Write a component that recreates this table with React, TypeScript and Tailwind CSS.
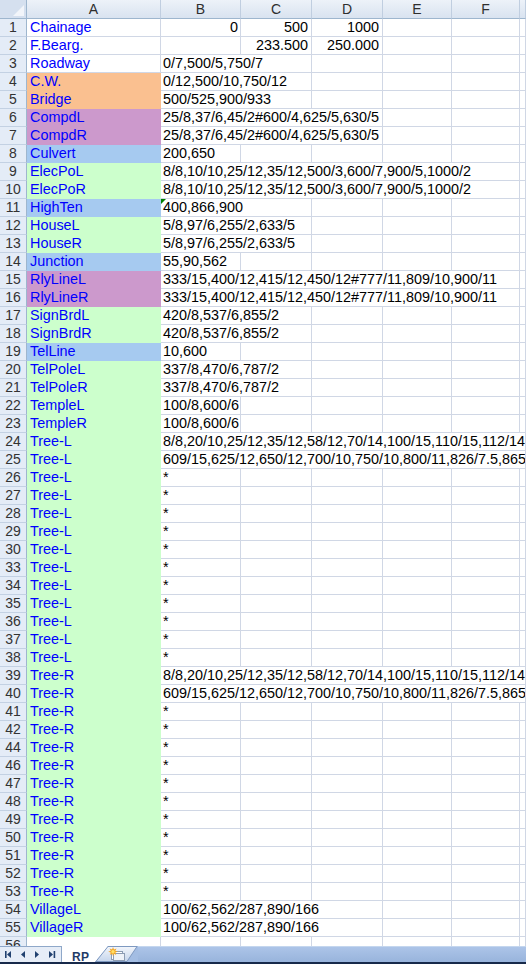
type Fill = 'none' | 'orange' | 'purple' | 'blue' | 'green'

type RowData = {
  n: number
  label?: string
  fill: Fill
  value?: string
  span?: number
  nums?: string[]
  flag?: boolean
}

const fills: Record<Fill, string> = {
  none: 'bg-white border-[#d0d7e5]',
  orange: 'bg-[#fac090] border-[#fac090]',
  purple: 'bg-[#cc99cc] border-[#cc99cc]',
  blue: 'bg-[#a6caf0] border-[#a6caf0]',
  green: 'bg-[#ccffcc] border-[#ccffcc]',
}

// widths for column B when its text runs over into the next columns
const spanWidth: Record<number, string> = {
  1: 'w-[80px] shrink-0',
  2: 'w-[151px] shrink-0',
  3: 'w-[222px] shrink-0',
  5: 'w-[359px] shrink-0',
  6: 'flex-1 min-w-0',
}

// C, D, E, F, G
const restCols = ['w-[71px] shrink-0', 'w-[71px] shrink-0', 'w-[69px] shrink-0', 'w-[68px] shrink-0', 'flex-1 min-w-0']

const headers = [
  { l: 'A', w: 'w-[134px] shrink-0' },
  { l: 'B', w: 'w-[80px] shrink-0' },
  { l: 'C', w: 'w-[71px] shrink-0' },
  { l: 'D', w: 'w-[71px] shrink-0' },
  { l: 'E', w: 'w-[69px] shrink-0' },
  { l: 'F', w: 'w-[68px] shrink-0' },
  { l: '', w: 'flex-1 min-w-0' },
]

const treeL1 = '8/8,20/10,25/12,35/12,58/12,70/14,100/15,110/15,112/14,120/14,135/12'
const treeL2 = '609/15,625/12,650/12,700/10,750/10,800/11,826/7.5,865/7,900/6'
const elec = '8/8,10/10,25/12,35/12,500/3,600/7,900/5,1000/2'
const rly = '333/15,400/12,415/12,450/12#777/11,809/10,900/11'
const compd = '25/8,37/6,45/2#600/4,625/5,630/5'

const rows: RowData[] = [
  { n: 1, label: 'Chainage', fill: 'none', nums: ['0', '500', '1000'] },
  { n: 2, label: 'F.Bearg.', fill: 'none', nums: ['', '233.500', '250.000'] },
  { n: 3, label: 'Roadway', fill: 'none', value: '0/7,500/5,750/7', span: 2 },
  { n: 4, label: 'C.W.', fill: 'orange', value: '0/12,500/10,750/12', span: 2 },
  { n: 5, label: 'Bridge', fill: 'orange', value: '500/525,900/933', span: 2 },
  { n: 6, label: 'CompdL', fill: 'purple', value: compd, span: 3 },
  { n: 7, label: 'CompdR', fill: 'purple', value: compd, span: 3 },
  { n: 8, label: 'Culvert', fill: 'blue', value: '200,650' },
  { n: 9, label: 'ElecPoL', fill: 'green', value: elec, span: 5 },
  { n: 10, label: 'ElecPoR', fill: 'green', value: elec, span: 5 },
  { n: 11, label: 'HighTen', fill: 'blue', value: '400,866,900', span: 2, flag: true },
  { n: 12, label: 'HouseL', fill: 'green', value: '5/8,97/6,255/2,633/5', span: 2 },
  { n: 13, label: 'HouseR', fill: 'green', value: '5/8,97/6,255/2,633/5', span: 2 },
  { n: 14, label: 'Junction', fill: 'blue', value: '55,90,562' },
  { n: 15, label: 'RlyLineL', fill: 'purple', value: rly, span: 5 },
  { n: 16, label: 'RlyLineR', fill: 'purple', value: rly, span: 5 },
  { n: 17, label: 'SignBrdL', fill: 'green', value: '420/8,537/6,855/2', span: 2 },
  { n: 18, label: 'SignBrdR', fill: 'green', value: '420/8,537/6,855/2', span: 2 },
  { n: 19, label: 'TelLine', fill: 'blue', value: '10,600' },
  { n: 20, label: 'TelPoleL', fill: 'green', value: '337/8,470/6,787/2', span: 2 },
  { n: 21, label: 'TelPoleR', fill: 'green', value: '337/8,470/6,787/2', span: 2 },
  { n: 22, label: 'TempleL', fill: 'green', value: '100/8,600/6' },
  { n: 23, label: 'TempleR', fill: 'green', value: '100/8,600/6' },
  { n: 24, label: 'Tree-L', fill: 'green', value: treeL1, span: 6 },
  { n: 25, label: 'Tree-L', fill: 'green', value: treeL2, span: 6 },
  ...[26, 27, 28, 29, 30, 33, 34, 35, 36, 37, 38].map((n) => ({ n, label: 'Tree-L', fill: 'green' as Fill, value: '*' })),
  { n: 39, label: 'Tree-R', fill: 'green', value: treeL1, span: 6 },
  { n: 40, label: 'Tree-R', fill: 'green', value: treeL2, span: 6 },
  ...[41, 42, 44, 46, 47, 48, 49, 50, 51, 52, 53].map((n) => ({ n, label: 'Tree-R', fill: 'green' as Fill, value: '*' })),
  { n: 54, label: 'VillageL', fill: 'green', value: '100/62,562/287,890/166', span: 3 },
  { n: 55, label: 'VillageR', fill: 'green', value: '100/62,562/287,890/166', span: 3 },
]

const cell = 'h-full border-r border-b border-[#d0d7e5] overflow-hidden whitespace-nowrap leading-[17px]'

function Row({ r }: { r: RowData }) {
  const span = r.span ?? 1
  return (
    <div className="flex h-[18px] shrink-0">
      <div className="h-full w-[27px] shrink-0 border-r border-b border-r-[#9eb6ce] border-b-[#c3d1e3] bg-[#e4ecf7] text-center text-[14px] leading-[17px] text-[#333]">
        {r.n}
      </div>
      <div
        className={`h-full w-[134px] shrink-0 overflow-hidden whitespace-nowrap border-r border-b pl-[3px] leading-[17px] text-[#0000ff] ${fills[r.fill]}`}
      >
        {r.label}
      </div>
      {r.nums ? (
        <>
          <div className={`${cell} w-[80px] shrink-0 pr-[2px] text-right`}>{r.nums[0]}</div>
          <div className={`${cell} w-[71px] shrink-0 pr-[3px] text-right`}>{r.nums[1]}</div>
          <div className={`${cell} w-[71px] shrink-0 pr-[3px] text-right`}>{r.nums[2]}</div>
          {restCols.slice(2).map((w, i) => (
            <div key={i} className={`${cell} ${w}`} />
          ))}
        </>
      ) : (
        <>
          <div className={`${cell} ${spanWidth[span]} relative pl-[2px] text-black`}>
            {r.flag && (
              <span className="absolute left-0 top-0 h-0 w-0 border-t-[5px] border-r-[5px] border-t-[#008000] border-r-transparent" />
            )}
            {r.value}
          </div>
          {restCols.slice(span - 1).map((w, i) => (
            <div key={i} className={`${cell} ${w}`} />
          ))}
        </>
      )}
    </div>
  )
}

function SheetTabs() {
  return (
    <div className="flex h-[18px] shrink-0 flex-col">
      <div className="flex h-[16px]">
        <div className="h-full w-[62px] shrink-0 border-t border-r border-[#8fa8c9] bg-[#e6edf7]">
          <svg width="61" height="15" viewBox="0 0 61 15">
            <g fill="#21416f">
              <rect x="5" y="4" width="1.6" height="7" />
              <polygon points="11,4 7,7.5 11,11" />
              <polygon points="25,4 21,7.5 25,11" />
              <polygon points="35,4 39,7.5 35,11" />
              <polygon points="49,4 53,7.5 49,11" />
              <rect x="53.6" y="4" width="1.6" height="7" />
            </g>
          </svg>
        </div>
        <div className="relative h-full w-[76px] shrink-0">
          <svg className="absolute inset-0" width="76" height="16" viewBox="0 0 76 16">
            <defs>
              <linearGradient id="ins" x1="0" y1="0" x2="0" y2="1">
                <stop offset="0" stopColor="#f3f6fb" />
                <stop offset="1" stopColor="#c5d5ec" />
              </linearGradient>
            </defs>
            <rect x="0" y="0" width="76" height="16" fill="#a3bde3" />
            <polygon points="33,0.5 75,0.5 65,15.5 33,15.5" fill="url(#ins)" stroke="#7e99c0" strokeWidth="1" />
            <polygon points="0,0 46,0 33,16 0,16" fill="#ffffff" />
            <line x1="46" y1="0.5" x2="33.5" y2="16" stroke="#7e99c0" strokeWidth="1" />
            <rect x="49.5" y="5.5" width="11" height="8" fill="#ffffff" stroke="#8c9cb3" />
            <rect x="51.5" y="7.5" width="11" height="7" fill="#eef2f8" stroke="#8c9cb3" />
            <polygon
              points="51,1 52,3.5 54.5,2.5 53.3,4.8 55.8,5.8 53.3,6.6 54.3,9 51.9,7.8 51,10.2 50.2,7.8 47.8,9 48.8,6.6 46.2,5.8 48.8,4.8 47.6,2.5 50.1,3.5"
              fill="#f5a623"
            />
            <circle cx="51" cy="5.8" r="1.7" fill="#ffe066" />
          </svg>
          <span className="relative pl-[10px] text-[12px] font-bold leading-[16px] tracking-[0.3px] text-[#1f3b66]">RP</span>
        </div>
        <div className="h-full flex-1 border-t border-[#c4d6ee] bg-linear-to-b from-[#acc4e8] to-[#98b4dc]" />
      </div>
      <div className="h-[2px] bg-[#17294a]" />
    </div>
  )
}

export default function App() {
  return (
    <div
      className="flex h-[964px] w-[526px] flex-col overflow-hidden bg-white text-[14.4px] text-black"
      style={{ fontFamily: '"Liberation Sans", Arial, sans-serif' }}
    >
      <div className="flex h-[19px] shrink-0">
        <div className="relative h-full w-[27px] shrink-0 border-r border-b border-[#9eb6ce] bg-[#d5e0ef]">
          <svg className="absolute right-[2px] bottom-[2px]" width="11" height="11" viewBox="0 0 11 11">
            <polygon points="11,0 11,11 0,11" fill="#f2f5fa" />
          </svg>
        </div>
        {headers.map((h, i) => (
          <div
            key={i}
            className={`h-full border-r border-b border-r-[#c0cee0] border-b-[#9eb6ce] bg-linear-to-b from-[#edf2f9] to-[#d9e3f0] pt-[1px] text-center text-[14px] leading-[17px] text-[#2e2e2e] ${h.w}`}
          >
            {h.l}
          </div>
        ))}
      </div>
      {rows.map((r) => (
        <Row key={r.n} r={r} />
      ))}
      <div className="min-h-0 flex-1 overflow-hidden">
        <Row r={{ n: 56, fill: 'none' }} />
      </div>
      <SheetTabs />
    </div>
  )
}
